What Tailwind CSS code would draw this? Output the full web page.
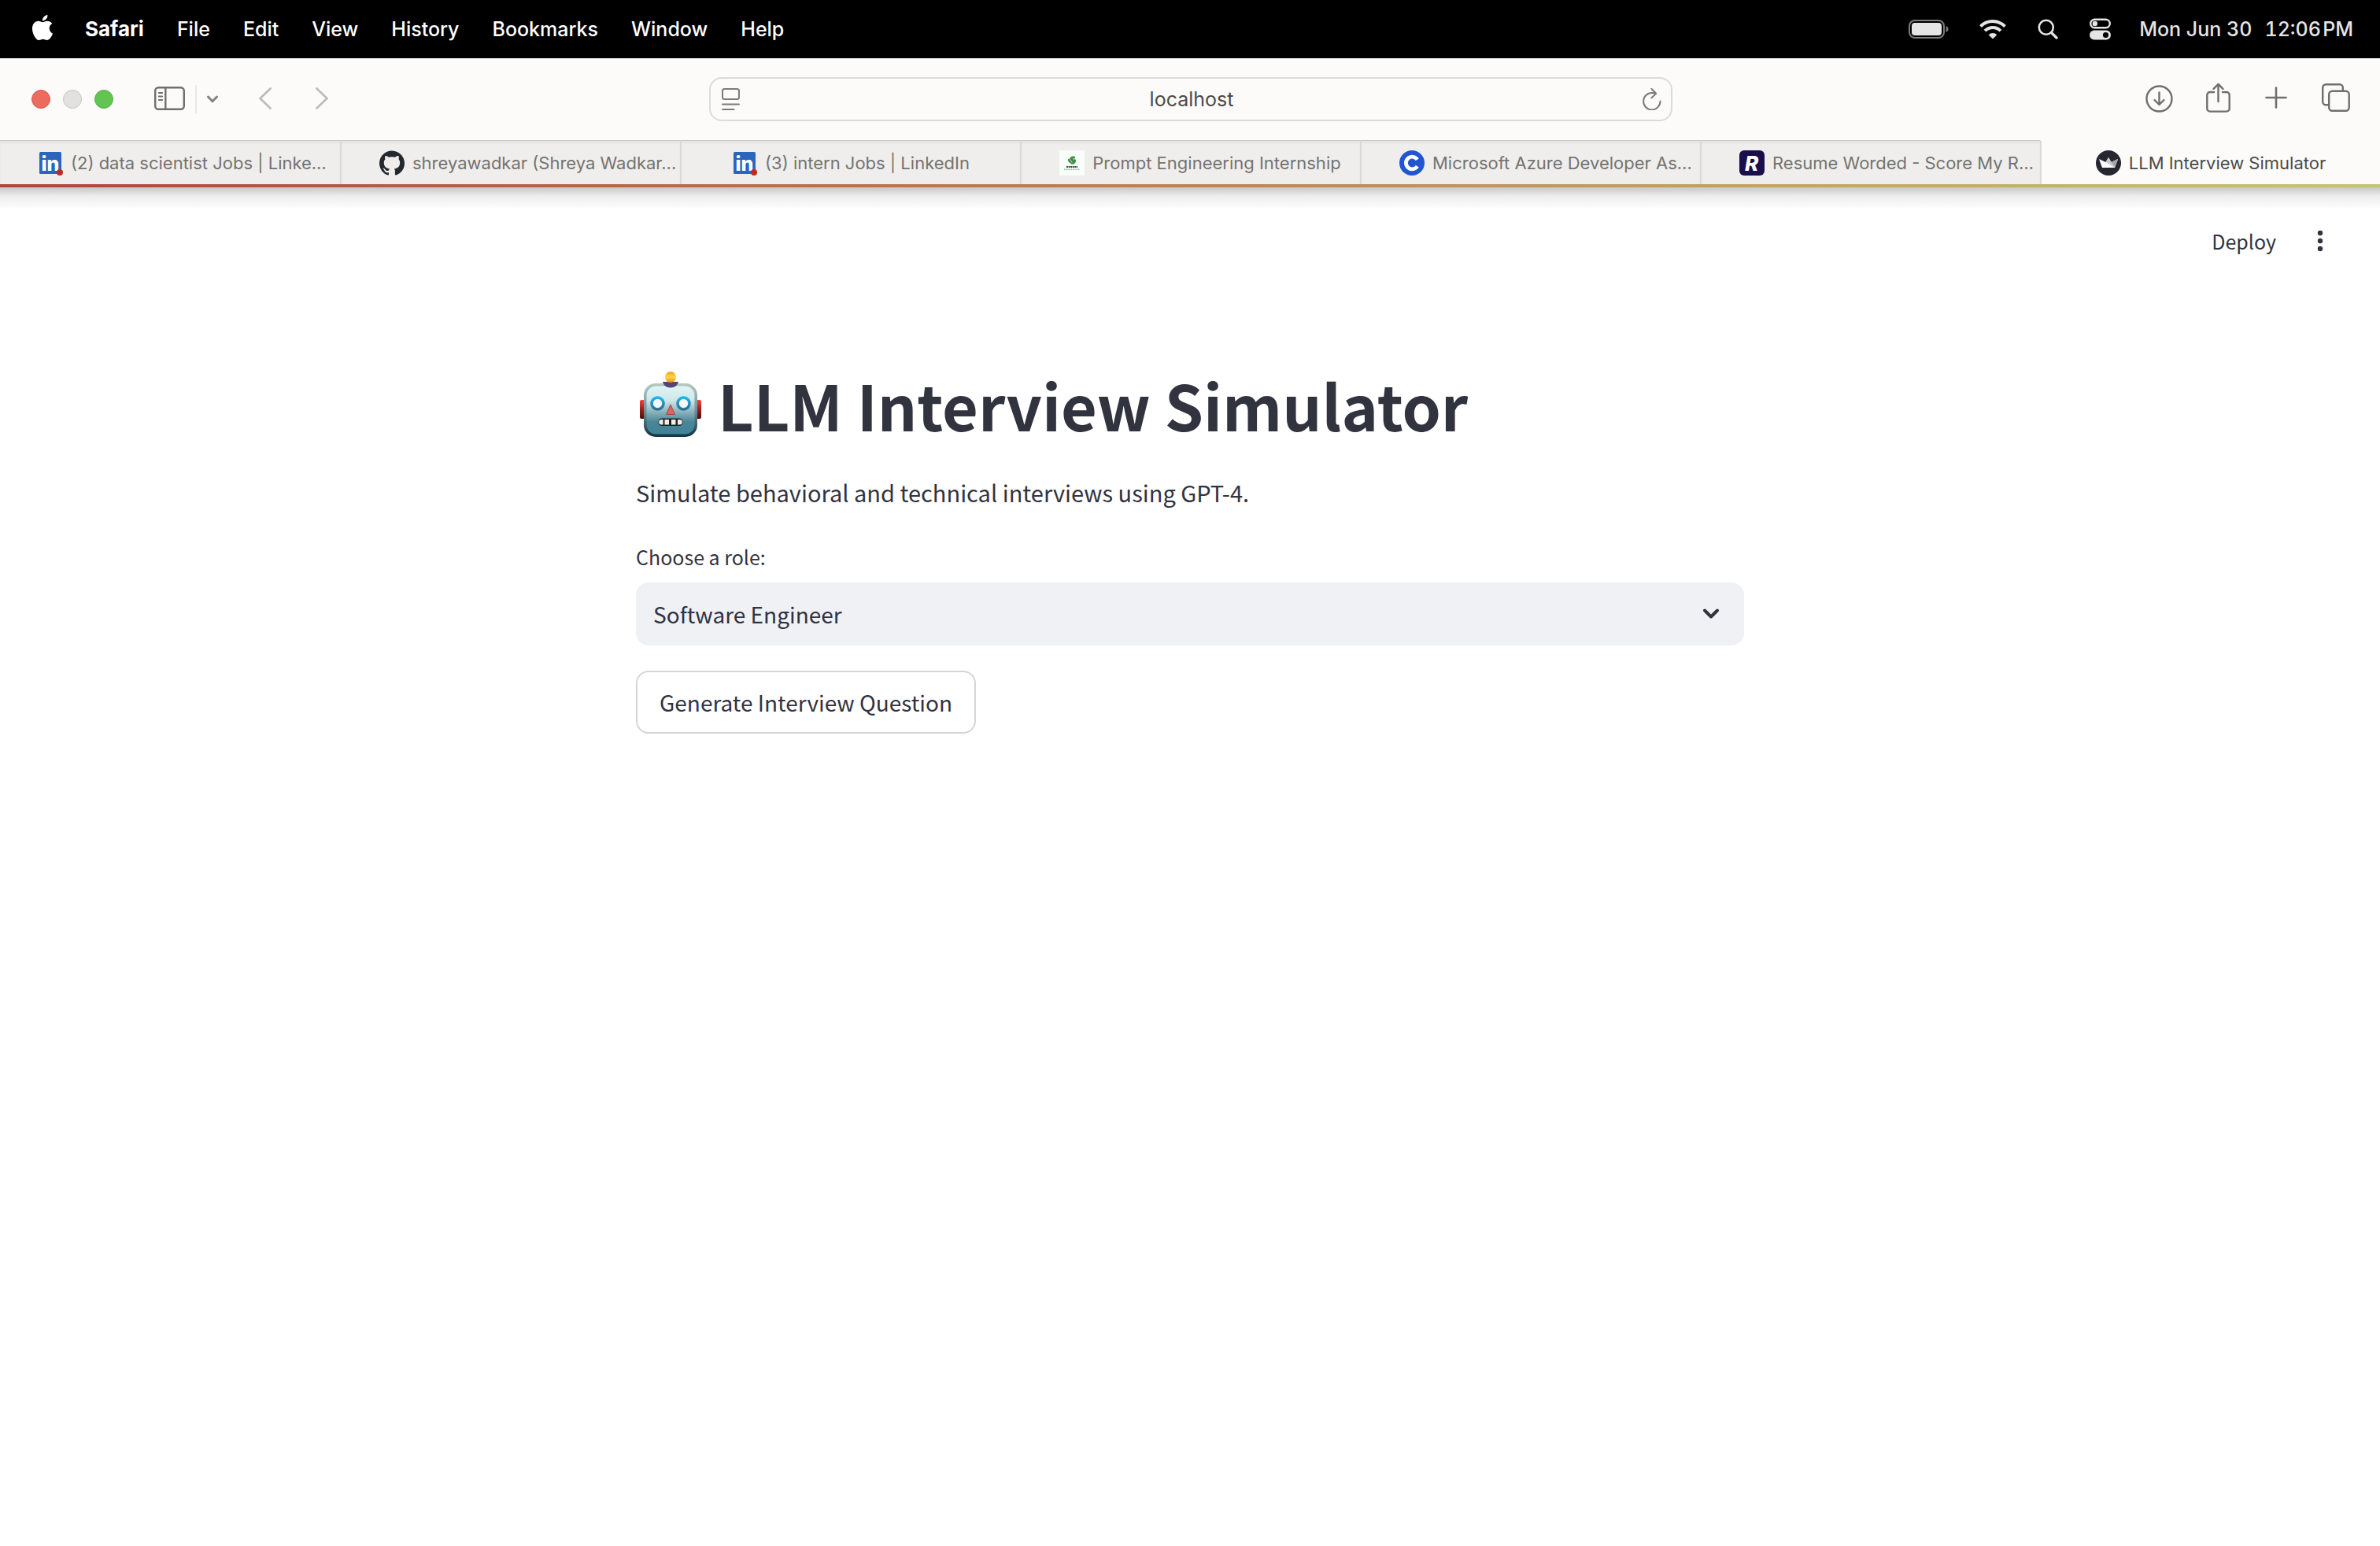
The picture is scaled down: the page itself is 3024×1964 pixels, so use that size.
<!DOCTYPE html>
<html lang="en">
<head>
<meta charset="utf-8">
<title>LLM Interview Simulator</title>
<script src="https://cdn.jsdelivr.net/npm/@tailwindcss/browser@4"></script>
</head>
<body class="flex min-h-screen flex-col bg-white font-[Inter,sans-serif]">

<!-- System menu bar -->
<header class="flex h-[74px] items-center justify-between bg-black pr-[34px] pl-[38px] text-[25px] leading-8 font-medium text-white">
  <nav class="flex items-center gap-[42px]" aria-label="Menu bar">
    <button aria-label="Apple menu" class="-mr-1"><svg class="-mt-1 block size-8" viewBox="0 0 24 24" fill="currentColor"><path d="M12.152 6.896c-.948 0-2.415-1.078-3.96-1.04-2.04.027-3.91 1.183-4.961 3.014-2.117 3.675-.546 9.103 1.519 12.09 1.013 1.454 2.208 3.09 3.792 3.039 1.52-.065 2.09-.987 3.935-.987 1.831 0 2.35.987 3.96.948 1.637-.026 2.676-1.48 3.676-2.948 1.156-1.688 1.636-3.325 1.662-3.415-.039-.013-3.182-1.221-3.22-4.857-.026-3.04 2.48-4.494 2.597-4.559-1.429-2.09-3.623-2.324-4.39-2.376-2-.156-3.675 1.09-4.61 1.09zM15.53 3.83c.843-1.012 1.4-2.427 1.245-3.83-1.207.052-2.662.805-3.532 1.818-.78.896-1.454 2.338-1.273 3.714 1.338.104 2.715-.688 3.559-1.701"/></svg></button>
    <button class="text-[26px] font-bold">Safari</button>
    <button>File</button>
    <button>Edit</button>
    <button>View</button>
    <button>History</button>
    <button>Bookmarks</button>
    <button>Window</button>
    <button>Help</button>
  </nav>
  <div class="flex items-center text-[#e5e5e5]">
    <svg class="mr-[38px] h-6 w-[52px]" viewBox="0 0 52 24" fill="none"><rect x="1" y="1" width="44" height="22" rx="7" stroke="#7a7a7a" stroke-width="2"/><rect x="4" y="4" width="38" height="16" rx="4" fill="currentColor"/><path d="M47.500 8v8c2-.8 3-2.200 3-4s-1-3.200-3-4z" fill="#7a7a7a"/></svg>
    <svg class="mr-10 h-[26px] w-[34px]" viewBox="0 0 34 26" fill="none" stroke="currentColor" stroke-width="4"><path d="M1.500 9.500a22 22 0 0 1 31 0M7 15.200a14.200 14.200 0 0 1 20 0"/><path d="M17 25.500l-5.300-5.300a7.500 7.500 0 0 1 10.600 0z" fill="currentColor" stroke="none"/></svg>
    <svg class="mr-10 size-[26px]" viewBox="0 0 26 26" fill="none" stroke="currentColor" stroke-width="2.600" stroke-linecap="round"><circle cx="10.800" cy="10.800" r="9"/><path d="M17.500 17.500l6.500 6.500" stroke-width="3.200"/></svg>
    <svg class="mr-9 h-7 w-[27px]" viewBox="0 0 27 28" fill="none"><rect x="1.200" y="1.700" width="24.600" height="10.600" rx="5.300" stroke="currentColor" stroke-width="2.400"/><circle cx="6.800" cy="7" r="3.200" fill="currentColor"/><rect y="15.500" width="27" height="12" rx="6" fill="currentColor"/><circle cx="20.500" cy="21.500" r="3.600" fill="#000"/></svg>
    <time class="flex gap-4 tabular-nums"><span>Mon Jun 30</span><span>12:06&#8202;PM</span></time>
  </div>
</header>

<!-- Browser toolbar -->
<div class="flex h-[104px] items-center bg-[#fcfbf9] text-[#6f6f6d]">
  <div class="flex flex-1 items-center pl-10">
    <div class="flex gap-4">
      <button aria-label="Close" class="size-6 rounded-full border border-[#d9574c] bg-[#ec6a5e]"></button>
      <button aria-label="Minimize" class="size-6 rounded-full border border-[#c6c5c3] bg-[#e2e1df]"></button>
      <button aria-label="Zoom" class="size-6 rounded-full border border-[#53b044] bg-[#61c554]"></button>
    </div>
    <button aria-label="Sidebar" class="ml-[52px]"><svg class="-mt-0.5 block h-[30px] w-[39px]" viewBox="0 0 39 30" fill="none" stroke="currentColor" stroke-width="2.400" stroke-linecap="round"><rect x="1.200" y="1.200" width="36.600" height="27.600" rx="4"/><path d="M14.300 1.500v27"/><path d="M5.800 8h4.400M5.800 12.500h4.400M5.800 17h4.400" stroke-width="1.800"/></svg></button>
    <span class="ml-[13px] h-9 w-0.5 bg-[#e9e8e6]"></span>
    <button aria-label="Tab groups" class="ml-3"><svg class="block h-[10px] w-4" viewBox="0 0 16 10" fill="none" stroke="#848487" stroke-width="3" stroke-linecap="round" stroke-linejoin="round"><path d="M2.500 2L8 7.800 13.500 2"/></svg></button>
    <button aria-label="Back" class="ml-[51px]"><svg class="-mt-0.5 block h-7 w-4" viewBox="0 0 16 28" fill="none" stroke="#bcbbb9" stroke-width="2.600" stroke-linecap="round" stroke-linejoin="round"><path d="M14.600 1.500L1.500 14l13.100 12.500"/></svg></button>
    <button aria-label="Forward" class="ml-14"><svg class="-mt-0.5 block h-7 w-4" viewBox="0 0 16 28" fill="none" stroke="#bcbbb9" stroke-width="2.600" stroke-linecap="round" stroke-linejoin="round"><path d="M1.400 1.500L14.500 14 1.400 26.500"/></svg></button>
  </div>
  <div class="flex h-14 w-[40.5%] items-center rounded-2xl border-2 border-[#dcdbd9] pr-[12px] pl-[14px] text-[#7b7b79]">
    <svg class="h-7 w-6 shrink-0" viewBox="0 0 24 28" fill="none" stroke="currentColor" stroke-width="2" stroke-linecap="round"><rect x="1" y="1" width="21" height="13" rx="2.500"/><path d="M1 20.500h21M1 27h14.500"/></svg>
    <input type="text" aria-label="Address" value="localhost" class="min-w-0 flex-1 bg-transparent text-center text-[25px] leading-8 text-[#4b4b49] outline-none">
    <button aria-label="Reload"><svg class="block h-7 w-6" viewBox="0 0 24 28" fill="none" stroke="currentColor" stroke-width="2" stroke-linecap="round" stroke-linejoin="round"><path d="M22.500 16.500A10.700 10.700 0 1 1 12 6c2 0 3.500.3 5 .7M11.500 1l5.700 5.800-5.700 5.400"/></svg></button>
  </div>
  <div class="flex flex-1 items-center justify-end pr-[38px]">
    <button aria-label="Downloads" class="mr-[42px]"><svg class="-mt-0.5 block size-[35px]" viewBox="0 0 35 35" fill="none" stroke="currentColor" stroke-width="2.400" stroke-linecap="round" stroke-linejoin="round"><circle cx="17.500" cy="17.500" r="16"/><path d="M17.500 9.500v15M11.500 19l6 6 6-6"/></svg></button>
    <button aria-label="Share" class="mr-[44px]"><svg class="-mt-1 block h-[38px] w-[31px]" viewBox="0 0 31 38" fill="none" stroke="currentColor" stroke-width="2.400" stroke-linecap="round" stroke-linejoin="round"><path d="M10 12H5a3.700 3.700 0 0 0-3.700 3.700v17.200A3.700 3.700 0 0 0 5 36.600h21a3.700 3.700 0 0 0 3.700-3.700V15.700A3.700 3.700 0 0 0 26 12h-5M15.500 24V2M9.500 7.800l6-6 6 6"/></svg></button>
    <button aria-label="New tab" class="mr-[44px]"><svg class="-mt-1 block size-[28px]" viewBox="0 0 28 28" stroke="currentColor" stroke-width="2.600" stroke-linecap="round"><path d="M14 1.500v25M1.500 14h25"/></svg></button>
    <button aria-label="Tab overview"><svg class="-mt-1 block size-[36px]" viewBox="0 0 36 36" fill="none" stroke="currentColor" stroke-width="2.400" stroke-linejoin="round"><rect x="9.200" y="9.700" width="25.500" height="25" rx="4"/><path d="M9 27.300H5.200a4 4 0 0 1-4-4V5.200a4 4 0 0 1 4-4h17.600a4 4 0 0 1 4 4v4.300"/></svg></button>
  </div>
</div>

<!-- Tab strip -->
<nav aria-label="Tabs" class="grid h-14 grid-cols-7 bg-[#efeeec] text-[22px] leading-7 whitespace-nowrap text-[#737371]">
  <a href="#" class="flex items-center justify-center-safe gap-[10px] border-t border-[#c9c8c6] pr-6 pl-12 inset-shadow-[0_3px_3px_#0000000a]">
    <svg class="size-8 shrink-0" viewBox="0 0 32 32"><rect x="2" y="2" width="28" height="28" rx="1.500" fill="#2b65bd"/><text x="4.500" y="26" font-family="Inter, sans-serif" font-weight="800" font-size="25" fill="#fff">in</text><circle cx="28" cy="28" r="4" fill="#c02a25"/></svg>
    <span>(2) data scientist Jobs | Linke…</span></a>
  <a href="#" class="flex items-center justify-center-safe gap-[10px] border-t border-l-2 border-t-[#c9c8c6] border-l-[#dbdad8] pr-6 pl-12 inset-shadow-[0_3px_3px_#0000000a]">
    <svg class="size-8 shrink-0" viewBox="0 0 24 24" fill="#24292f"><path d="M12 .297c-6.630 0-12 5.373-12 12 0 5.303 3.438 9.800 8.205 11.385.6.113.82-.258.82-.577 0-.285-.01-1.040-.015-2.040-3.338.724-4.042-1.610-4.042-1.610C4.422 18.070 3.633 17.700 3.633 17.700c-1.087-.744.084-.729.084-.729 1.205.084 1.838 1.236 1.838 1.236 1.070 1.835 2.809 1.305 3.495.998.108-.776.417-1.305.76-1.605-2.665-.3-5.466-1.332-5.466-5.930 0-1.310.465-2.380 1.235-3.220-.135-.303-.54-1.523.105-3.176 0 0 1.005-.322 3.300 1.230.96-.267 1.980-.399 3-.405 1.020.006 2.040.138 3 .405 2.280-1.552 3.285-1.230 3.285-1.230.645 1.653.24 2.873.12 3.176.765.84 1.230 1.910 1.230 3.220 0 4.610-2.805 5.625-5.475 5.920.42.36.81 1.096.81 2.220 0 1.606-.015 2.896-.015 3.286 0 .315.21.69.825.57C20.565 22.092 24 17.592 24 12.297c0-6.627-5.373-12-12-12"/></svg>
    <span>shreyawadkar (Shreya Wadkar…</span></a>
  <a href="#" class="flex items-center justify-center gap-[10px] border-t border-l-2 border-t-[#c9c8c6] border-l-[#dbdad8] px-4 inset-shadow-[0_3px_3px_#0000000a]">
    <svg class="size-8 shrink-0" viewBox="0 0 32 32"><rect x="2" y="2" width="28" height="28" rx="1.500" fill="#2b65bd"/><text x="4.500" y="26" font-family="Inter, sans-serif" font-weight="800" font-size="25" fill="#fff">in</text><circle cx="28" cy="28" r="4" fill="#c02a25"/></svg>
    <span>(3) intern Jobs | LinkedIn</span></a>
  <a href="#" class="flex items-center justify-center-safe gap-[10px] border-t border-l-2 border-t-[#c9c8c6] border-l-[#dbdad8] pr-6 pl-12 inset-shadow-[0_3px_3px_#0000000a]">
    <svg class="size-8 shrink-0" viewBox="0 0 32 32"><rect width="32" height="32" fill="#f9fdfa"/><path d="M10.800 11.500c.3-.8 1.500-1 2.200-.5.300-2.500 3-4 5-3.500 1.800-.2 2.800 1.200 1.800 2.300-.5.700-.8.900-.6 1.500 1.900.1 2.300 1.700 1.600 3.200-.5 2-2.600 3.700-4.600 3.200-1.500 0-1.900-1.200-2.700-2-1.500-.4-2.700-1.900-2.700-4.200z" fill="#3f8f47"/><path d="M13.500 11.500c1.500 2 2 2.500 2.500 4M17 10.500c.8.600 1.500.3 2.200.8" stroke="#cfe8d1" fill="none"/><path d="M9 21h14" stroke="#3c4a3d" stroke-width="1.800" stroke-dasharray="2 .6"/><path d="M6 24.300h20" stroke="#7fb986" stroke-width="1.400" stroke-dasharray="1.300 .9"/></svg>
    <span>Prompt Engineering Internship</span></a>
  <a href="#" class="flex items-center justify-center-safe gap-[10px] border-t border-l-2 border-t-[#c9c8c6] border-l-[#dbdad8] pr-6 pl-12 inset-shadow-[0_3px_3px_#0000000a]">
    <svg class="size-8 shrink-0" viewBox="0 0 32 32"><circle cx="16" cy="16" r="16" fill="#2156d0"/><path d="M22.800 11.800A7.800 7.800 0 1 0 22.800 20.200" fill="none" stroke="#fff" stroke-width="4.800"/></svg>
    <span>Microsoft Azure Developer As…</span></a>
  <a href="#" class="flex items-center justify-center-safe gap-[10px] border-t border-l-2 border-t-[#c9c8c6] border-l-[#dbdad8] pr-6 pl-12 inset-shadow-[0_3px_3px_#0000000a]">
    <svg class="size-8 shrink-0" viewBox="0 0 32 32"><rect width="32" height="32" rx="6" fill="#190f4b"/><text x="15.500" y="25.500" text-anchor="middle" font-family="Inter, sans-serif" font-weight="800" font-style="italic" font-size="26" fill="#fff">R</text></svg>
    <span>Resume Worded - Score My R…</span></a>
  <a href="#" aria-current="page" class="flex items-center justify-center gap-[10px] border-t border-l-2 border-t-transparent border-l-[#dbdad8] bg-[#fcfbf9] px-4 text-[#4b4b49]">
    <svg class="size-8 shrink-0" viewBox="0 0 32 32"><circle cx="16" cy="16" r="16" fill="#262730"/><path d="M4 11l8.500 4L16 9l3.600 6L28 11l-4 11H8z" fill="#fff"/><path d="M16 9l3.600 6L28 11l-4 11-11.500-7z" fill="#c9c9cb"/><path d="M19.600 15L28 11l-4 10z" fill="#a3a3a8"/></svg>
    <span>LLM Interview Simulator</span></a>
</nav>
<div class="h-1 bg-linear-to-r from-[#b3433e] via-[#bf8350] to-[#c3c66c]"></div>

<!-- App -->
<div class="flex h-[136px] flex-col font-['Noto_Sans_CJK_SC',sans-serif] text-[#31333f]">
  <div class="h-7 bg-linear-to-b from-[#c8c8c8] via-[#ededed] via-40% to-white"></div>
  <div class="flex h-20 items-center justify-end gap-[52px] pr-[72px]">
    <button class="text-[25px] leading-10">Deploy</button>
    <button aria-label="Main menu"><svg class="block h-[28px] w-2" viewBox="0 0 8 28" fill="currentColor"><circle cx="4" cy="4" r="3.200"/><circle cx="4" cy="14" r="3.200"/><circle cx="4" cy="24" r="3.200"/></svg></button>
  </div>
</div>
<main class="mx-auto flex w-full max-w-[1408px] flex-col items-start pt-[87px] font-['Noto_Sans_CJK_SC',sans-serif] text-[28px] leading-[52px] text-[#31333f]">
  <h1 class="flex items-center text-[79px] leading-[106px] font-bold">
    <svg role="img" aria-label="Robot" class="mr-5 ml-1 h-[84px] w-20" viewBox="0 0 80 84">
      <defs>
        <linearGradient id="face" x2="0" y2="1"><stop stop-color="#dff5f4"/><stop offset=".3" stop-color="#cfe6e8"/><stop offset=".75" stop-color="#4b8496"/><stop offset="1" stop-color="#3d8498"/></linearGradient>
        <linearGradient id="rim" x2="0" y2="1"><stop stop-color="#b5cac2"/><stop offset=".5" stop-color="#6f929b"/><stop offset="1" stop-color="#12323f"/></linearGradient>
        <linearGradient id="ear" x2="0" y2="1"><stop stop-color="#f0473f"/><stop offset=".5" stop-color="#9a1f1c"/><stop offset="1" stop-color="#4e0b0b"/></linearGradient>
        <linearGradient id="bulb" x2="0" y2="1"><stop stop-color="#f59a24"/><stop offset=".5" stop-color="#ffd84a"/><stop offset="1" stop-color="#ef8d1c"/></linearGradient>
        <linearGradient id="eye" x2="0" y2="1"><stop stop-color="#1cb6f0"/><stop offset="1" stop-color="#2b6f8f"/></linearGradient>
      </defs>
      <rect x="1" y="36" width="9" height="24" rx="2" fill="url(#ear)"/><rect x="70" y="36" width="9" height="24" rx="2" fill="url(#ear)"/>
      <rect x="6" y="15" width="68" height="68" rx="15" fill="url(#rim)"/>
      <rect x="9.500" y="18.500" width="61" height="61" rx="12" fill="url(#face)"/>
      <path d="M30 13h20c-1 4.500-4.500 7.500-10 7.500S31 17.500 30 13z" fill="#554377"/>
      <circle cx="40" cy="7" r="7" fill="url(#bulb)"/>
      <circle cx="23.500" cy="40.500" r="7.500" fill="#f4f9fb" stroke="url(#eye)" stroke-width="3.600"/><circle cx="56.500" cy="40.500" r="7.500" fill="#f4f9fb" stroke="url(#eye)" stroke-width="3.600"/>
      <path d="M40 42l5.500 12.500h-11z" fill="#dc6563" stroke="#a5474a"/>
      <rect x="24.500" y="59.500" width="31" height="9.500" rx="4.500" fill="#1c2226"/><path d="M30.500 61v6.500h-2a3 3 0 0 1 0-6.500zM32.500 61H38v6.500h-5.500zM41 61h5.500v6.500H41zM49 61h2.500a3 3 0 0 1 0 6.500H49z" fill="#f0efe6"/>
    </svg>LLM Interview Simulator</h1>
  <p class="mt-8 text-[29px]">Simulate behavioral and technical interviews using GPT-4.</p>
  <label for="role" class="mt-9 text-[25px] leading-10">Choose a role:</label>
  <div class="relative mt-[13px] w-full">
    <select id="role" class="block h-20 w-full appearance-none rounded-2xl bg-[#f0f1f5] px-[22px] outline-none"><option>Software Engineer</option></select>
    <svg class="pointer-events-none absolute top-8 right-[31px] h-4 w-[22px]" viewBox="0 0 22 16" fill="none" stroke="currentColor" stroke-width="4" stroke-linecap="round" stroke-linejoin="round"><path d="M3 3.500l8 8 8-8"/></svg>
  </div>
  <button class="mt-8 h-20 rounded-2xl border-2 border-[#d5d5d7] px-7">Generate Interview Question</button>
</main>
</body>
</html>
